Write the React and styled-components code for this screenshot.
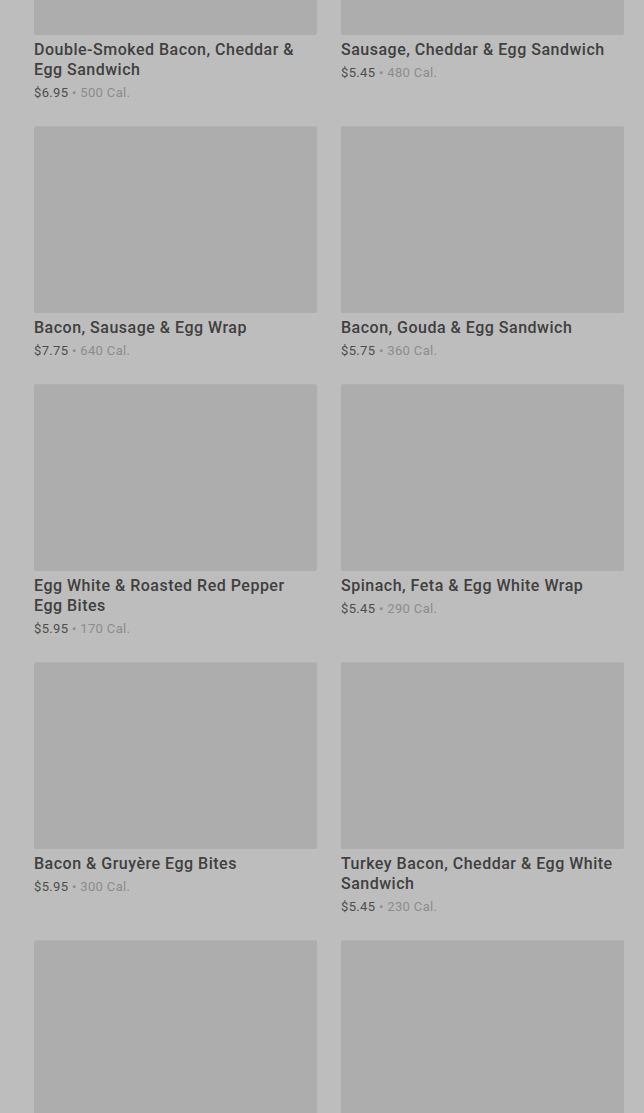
import React from "react";
import styled, { createGlobalStyle } from "styled-components";

const Global = createGlobalStyle`
  html, body { margin: 0; padding: 0; background: #bdbdbd; }
  body { font-family: Roboto, "Noto Sans", Arial, sans-serif; overflow: hidden; }
`;

const Page = styled.main`
  padding: 0 20px 0 34px;
  height: 1113px;
  overflow: hidden;
`;

const Grid = styled.div`
  margin-top: -152px;
  display: grid;
  grid-template-columns: 283px 283px;
  column-gap: 24px;
  row-gap: 24px;
`;

const Card = styled.article`
  display: flex;
  flex-direction: column;
`;

const Photo = styled.div`
  height: 187px;
  background: #adadad;
  border-radius: 2px;
  box-shadow: inset 0 1px 0 rgba(255, 255, 255, 0.06);
`;

const Title = styled.h3`
  margin: 5px 0 0;
  font-size: 16px;
  line-height: 20px;
  font-weight: 500;
  color: #404040;
  letter-spacing: 0.5px;
`;

const Meta = styled.div`
  margin-top: 4px;
  font-size: 13px;
  line-height: 18px;
  color: #8c8c8c;
  letter-spacing: 0.35px;
`;

const Price = styled.span`
  color: #4d4d4d;
`;

const items = [
  { id: 1, name: "Double-Smoked Bacon, Cheddar & Egg Sandwich", price: "$6.95", cal: "500" },
  { id: 2, name: "Sausage, Cheddar & Egg Sandwich", price: "$5.45", cal: "480" },
  { id: 3, name: "Bacon, Sausage & Egg Wrap", price: "$7.75", cal: "640" },
  { id: 4, name: "Bacon, Gouda & Egg Sandwich", price: "$5.75", cal: "360" },
  { id: 5, name: "Egg White & Roasted Red Pepper Egg Bites", price: "$5.95", cal: "170" },
  { id: 6, name: "Spinach, Feta & Egg White Wrap", price: "$5.45", cal: "290" },
  { id: 7, name: "Bacon & Gruyère Egg Bites", price: "$5.95", cal: "300" },
  { id: 8, name: "Turkey Bacon, Cheddar & Egg White Sandwich", price: "$5.45", cal: "230" },
  { id: 9 },
  { id: 10 },
];

export default function App() {
  return (
    <>
      <Global />
      <Page>
        <Grid>
          {items.map((it) => (
            <Card key={it.id}>
              <Photo />
              {it.name && (
                <>
                  <Title>{it.name}</Title>
                  <Meta>
                    <Price>{it.price}</Price> • {it.cal} Cal.
                  </Meta>
                </>
              )}
            </Card>
          ))}
        </Grid>
      </Page>
    </>
  );
}
